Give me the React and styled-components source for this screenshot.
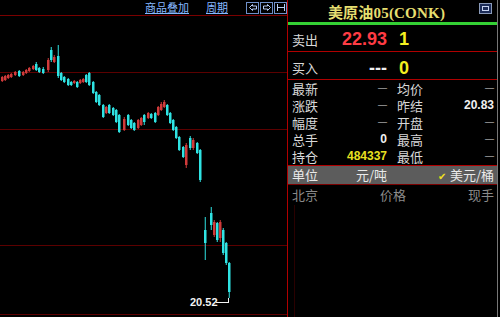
import React from 'react';
import styled, { createGlobalStyle } from 'styled-components';

const Global = createGlobalStyle`
  html, body { margin: 0; padding: 0; background: #000; }
  body { font-family: "Noto Sans CJK SC", "Liberation Sans", sans-serif; }
`;

const Screen = styled.div`
  display: flex;
  width: 500px;
  height: 317px;
  background: #000;
  overflow: hidden;
`;

const ChartColumn = styled.div`
  width: 288px;
  box-sizing: border-box;
  border-right: 1px solid #b00000;
  display: flex;
  flex-direction: column;
`;

const Toolbar = styled.div`
  height: 15px;
  border-bottom: 1px solid #7a0000;
  display: flex;
  align-items: center;
  justify-content: flex-end;
`;

const ToolLink = styled.span`
  font-size: 11px;
  line-height: 13px;
  color: #86b8ff;
  text-decoration: underline;
  margin-right: ${p => p.$gap}px;
`;

const ToolButton = styled.span`
  width: 13px;
  height: 12px;
  box-sizing: border-box;
  border: 1px solid #6f8fc8;
  margin-left: 1px;
  display: flex;
  align-items: center;
  justify-content: center;
`;

const ChartArea = styled.div`
  flex: 1;
  position: relative;
`;

const ChartSvg = styled.svg`
  display: block;
  width: 287px;
  height: 301px;
`;

const Panel = styled.div`
  width: 210px;
  box-sizing: border-box;
  border-right: 1px solid #777;
  display: flex;
  flex-direction: column;
`;

const Header = styled.div`
  position: relative;
  height: 22px;
  display: flex;
  align-items: center;
  justify-content: center;
  padding-right: 12px;
`;

const Title = styled.span`
  font-family: "Liberation Serif", "Noto Sans CJK SC", serif;
  font-weight: bold;
  font-size: 15px;
  color: #e6df70;
  letter-spacing: 0.2px;
`;

const CornerIcon = styled.span`
  position: absolute;
  right: 5px;
  top: 3px;
  width: 13px;
  height: 11px;
  box-sizing: border-box;
  border: 1px solid #8a9ab8;
  background: #1c2c58;
  display: flex;
  align-items: flex-start;
  justify-content: center;
  padding-top: 2px;
`;

const CornerBar = styled.span`
  width: 7px;
  height: 5px;
  border: 1px solid #c8d4f0;
  box-sizing: border-box;
`;

const GreenBar = styled.div`
  height: 3px;
  background: #34d034;
`;

const QuoteRow = styled.div`
  height: ${p => p.$h}px;
  box-sizing: border-box;
  padding: ${p => p.$pt}px 3px 0 4px;
  border-bottom: 1px solid #b00000;
  display: grid;
  grid-template-columns: 36px 59px 1fr;
  align-items: center;
`;

const Label = styled.span`
  font-size: 13px;
  line-height: 15px;
  color: ${p => p.$color || '#d8d8d8'};
  padding-left: ${p => p.$pl || 0}px;
  white-space: nowrap;
`;

const BigNum = styled.span`
  font-family: "Liberation Sans", Arial, sans-serif;
  font-weight: bold;
  font-size: 18px;
  line-height: 20px;
  color: ${p => p.$color};
  text-align: ${p => p.$align || 'right'};
  padding-left: ${p => p.$pl || 0}px;
`;

const StatsGrid = styled.div`
  padding: 0 3px 0 4px;
  border-bottom: 1px solid #b00000;
  display: grid;
  grid-template-columns: 36px 59px 46px 1fr;
  grid-auto-rows: 17px;
  align-items: center;
`;

const Value = styled.span`
  font-family: "Liberation Sans", Arial, sans-serif;
  font-weight: bold;
  font-size: 12px;
  line-height: 15px;
  color: ${p => p.$color || '#f0f0f0'};
  text-align: right;
`;

const Dash = styled.span`
  font-family: "Liberation Sans", Arial, sans-serif;
  font-size: 9px;
  line-height: 15px;
  color: #e0e0e0;
  text-align: right;
`;

const UnitRow = styled.div`
  height: 18px;
  background: #5c5c5c;
  border-bottom: 1px solid #7a0000;
  padding: 0 3px 0 4px;
  display: grid;
  grid-template-columns: 36px 59px 1fr;
  align-items: center;
`;

const UnitText = styled.span`
  font-size: 13px;
  line-height: 16px;
  color: #eaeaea;
  text-align: ${p => p.$align || 'left'};
  white-space: nowrap;
`;

const Check = styled.span`
  color: #f0e020;
  font-size: 10px;
  margin-right: 4px;
`;

const ListHeader = styled.div`
  height: 20px;
  padding: 0 3px 0 4px;
  display: grid;
  grid-template-columns: 1fr auto 1fr;
  align-items: center;
`;

const HeadCell = styled.span`
  font-size: 13px;
  line-height: 16px;
  color: #8a8a8a;
  text-align: ${p => p.$align || 'left'};
`;

const ListBody = styled.div`
  flex: 1;
  margin-left: 6px;
  border-left: 1px solid #2a0000;
`;

const R = '#d03a3a';
const C = '#2fe3e3';

// [x, bodyTop, bodyBottom, wickTop, wickBottom, colour]
const candles = [
  [1, 77, 81, 76, 82, R], [4, 76, 80, 75, 81, R], [7, 75, 78, 74, 79, R],
  [10, 74, 77, 73, 78, R], [14, 72, 75, 71, 76, R], [18, 71, 76, 70, 77, C],
  [22, 72, 75, 71, 76, R], [25, 70, 73, 69, 74, R], [28, 68, 71, 67, 72, R],
  [32, 66, 69, 65, 70, R], [35, 64, 70, 62, 71, C], [38, 68, 72, 67, 73, C],
  [42, 69, 73, 67, 74, C], [47, 60, 70, 58, 72, R], [50, 50, 60, 47, 62, C],
  [53, 57, 62, 55, 63, R], [57, 56, 76, 45, 78, C], [60, 73, 80, 72, 81, C],
  [63, 77, 82, 76, 83, C], [67, 79, 85, 78, 86, C], [70, 82, 85, 81, 86, C],
  [73, 81, 83, 80, 84, R], [76, 82, 87, 81, 88, C], [79, 80, 83, 79, 84, R],
  [82, 79, 82, 78, 83, R], [85, 75, 82, 74, 83, C], [88, 73, 85, 72, 86, C],
  [92, 82, 93, 81, 94, C], [95, 92, 102, 91, 103, C], [98, 95, 105, 94, 106, C],
  [102, 105, 117, 104, 118, C], [105, 107, 113, 106, 114, R], [108, 105, 113, 104, 114, C],
  [112, 108, 115, 107, 116, C], [115, 110, 122, 109, 123, C], [118, 115, 132, 114, 133, C],
  [123, 119, 130, 117, 131, R], [127, 115, 125, 114, 126, C], [130, 120, 128, 119, 129, C],
  [133, 123, 130, 122, 131, C], [137, 120, 128, 119, 129, R], [140, 118, 125, 117, 126, R],
  [143, 115, 122, 114, 125, C], [147, 113, 118, 112, 119, R], [150, 114, 118, 113, 119, C],
  [154, 113, 122, 112, 123, C], [157, 107, 115, 106, 116, R], [160, 104, 110, 102, 111, R],
  [163, 102, 107, 100, 108, R], [166, 105, 115, 104, 116, C], [169, 113, 123, 112, 124, C],
  [172, 120, 130, 119, 131, C], [175, 127, 138, 126, 139, C], [178, 137, 150, 136, 151, C],
  [182, 147, 157, 146, 158, C], [185, 145, 165, 143, 168, R], [189, 138, 148, 136, 150, C],
  [192, 140, 148, 138, 150, R], [196, 143, 153, 142, 154, C], [199, 150, 180, 149, 182, C],
  [204, 230, 243, 217, 260, C], [210, 213, 225, 207, 230, C], [213, 222, 235, 220, 237, R],
  [216, 223, 240, 222, 242, C], [219, 222, 238, 220, 242, R], [222, 230, 253, 228, 255, C],
  [225, 243, 263, 242, 265, C], [228, 263, 292, 262, 298, C],
];

function Chart() {
  return (
    <ChartSvg viewBox="0 16 287 301">
      {[72, 129, 245, 314].map(y => (
        <line key={y} x1="0" x2="287" y1={y + 0.5} y2={y + 0.5} stroke="#5c0000" strokeWidth="1" />
      ))}
      {candles.map(([x, bt, bb, wt, wb, col], i) => (
        <g key={i}>
          <line x1={x + 1.25} x2={x + 1.25} y1={wt} y2={wb} stroke={col} strokeWidth="1" />
          <rect x={x} y={bt} width="2.5" height={Math.max(1, bb - bt)} fill={col} />
        </g>
      ))}
      <text x="190" y="306" fill="#f2f2f2" fontFamily="Liberation Sans, Arial, sans-serif" fontWeight="bold" fontSize="11">20.52</text>
      <line x1="216" x2="228" y1="302.5" y2="302.5" stroke="#f2f2f2" strokeWidth="1" />
      <line x1="228.5" x2="228.5" y1="298" y2="303" stroke="#f2f2f2" strokeWidth="1" />
    </ChartSvg>
  );
}

function ArrowIcon({ dir }) {
  const d = dir === 'left'
    ? 'M1.5 4.5 L4.5 1.5 L4.5 3 L8.5 3 L8.5 6 L4.5 6 L4.5 7.5 Z'
    : 'M8.5 4.5 L5.5 1.5 L5.5 3 L1.5 3 L1.5 6 L5.5 6 L5.5 7.5 Z';
  return (
    <svg width="10" height="9" viewBox="0 0 10 9">
      <path d={d} fill="none" stroke="#b8cdf5" strokeWidth="1" />
    </svg>
  );
}

function SplitIcon() {
  return (
    <svg width="10" height="9" viewBox="0 0 10 9">
      <path d="M1.5 1 V8 M1.5 4.5 H8.5 M8.5 1 V8" fill="none" stroke="#b8cdf5" strokeWidth="1" />
    </svg>
  );
}

const stats = [
  ['最新', null, '均价', null],
  ['涨跌', null, '昨结', '20.83'],
  ['幅度', null, '开盘', null],
  ['总手', '0', '最高', null],
  ['持仓', '484337', '最低', null],
];

export default function App() {
  return (
    <>
      <Global />
      <Screen>
        <ChartColumn>
          <Toolbar>
            <ToolLink $gap={17}>商品叠加</ToolLink>
            <ToolLink $gap={17}>周期</ToolLink>
            <ToolButton><ArrowIcon dir="left" /></ToolButton>
            <ToolButton><ArrowIcon dir="right" /></ToolButton>
            <ToolButton><SplitIcon /></ToolButton>
          </Toolbar>
          <ChartArea>
            <Chart />
          </ChartArea>
        </ChartColumn>
        <Panel>
          <Header>
            <Title>美原油05(CONK)</Title>
            <CornerIcon><CornerBar /></CornerIcon>
          </Header>
          <GreenBar />
          <QuoteRow $h={27} $pt={2}>
            <Label>卖出</Label>
            <BigNum $color="#ff3c44">22.93</BigNum>
            <BigNum $color="#f4f020" $align="left" $pl={12}>1</BigNum>
          </QuoteRow>
          <QuoteRow $h={28} $pt={4}>
            <Label>买入</Label>
            <BigNum $color="#f0f0f0">---</BigNum>
            <BigNum $color="#f4f020" $align="left" $pl={12}>0</BigNum>
          </QuoteRow>
          <StatsGrid>
            {stats.map(([l1, v1, l2, v2]) => (
              <React.Fragment key={l1}>
                <Label>{l1}</Label>
                {v1 === null ? <Dash>—</Dash> : <Value $color={l1 === '持仓' ? '#e8e020' : undefined}>{v1}</Value>}
                <Label $pl={10}>{l2}</Label>
                {v2 === null ? <Dash>—</Dash> : <Value>{v2}</Value>}
              </React.Fragment>
            ))}
          </StatsGrid>
          <UnitRow>
            <UnitText>单位</UnitText>
            <UnitText $align="right">元/吨</UnitText>
            <UnitText $align="right"><Check>✔</Check>美元/桶</UnitText>
          </UnitRow>
          <ListHeader>
            <HeadCell>北京</HeadCell>
            <HeadCell $align="center">价格</HeadCell>
            <HeadCell $align="right">现手</HeadCell>
          </ListHeader>
          <ListBody />
        </Panel>
      </Screen>
    </>
  );
}
